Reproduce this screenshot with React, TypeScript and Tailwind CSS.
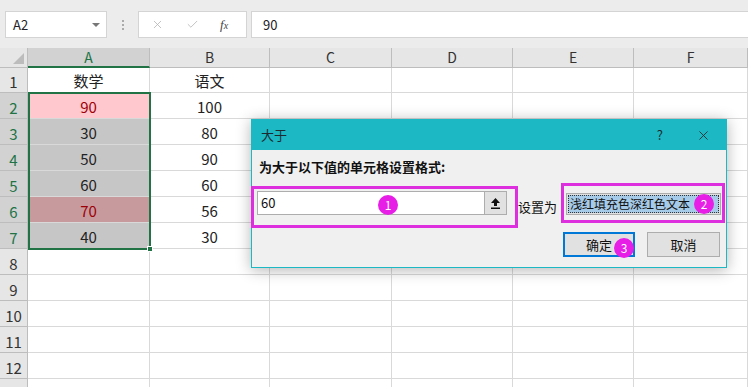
import { X, Check } from "lucide-react";

const cols = ["A", "B", "C", "D", "E", "F"];

const cellA: Record<number, { text: string; cls: string }> = {
  1: { text: "数学", cls: "bg-white text-[#222]" },
  2: { text: "90", cls: "bg-[#ffc7ce] text-[#9c0006]" },
  3: { text: "30", cls: "bg-[#c6c6c6] text-[#222]" },
  4: { text: "50", cls: "bg-[#c6c6c6] text-[#222]" },
  5: { text: "60", cls: "bg-[#c6c6c6] text-[#222]" },
  6: { text: "70", cls: "bg-[#c79a9e] text-[#9c0006]" },
  7: { text: "40", cls: "bg-[#c6c6c6] text-[#222]" },
};

const colB: Record<number, string> = {
  1: "语文",
  2: "100",
  3: "80",
  4: "90",
  5: "60",
  6: "56",
  7: "30",
};

function Badge({ n }: { n: number }) {
  return (
    <span className="flex h-[20px] w-[20px] items-center justify-center rounded-full bg-[#e61ee6] text-[12px] leading-none text-white">
      {n}
    </span>
  );
}

function FormulaBar() {
  return (
    <div className="h-[48px] bg-[#ececec] pt-[11px]">
      <div className="flex h-[27px] items-stretch">
        <div className="ml-[5px] flex w-[102px] items-center justify-between border border-[#d4d4d4] bg-white pl-[7px] pr-[6px] text-[13px] text-[#222]">
          <span>A2</span>
          <span className="h-0 w-0 border-x-[4px] border-t-[4px] border-x-transparent border-t-[#777]" />
        </div>
        <div className="flex w-[31px] flex-col items-center justify-center gap-[2px]">
          <span className="h-[2px] w-[2px] bg-[#aaa]" />
          <span className="h-[2px] w-[2px] bg-[#aaa]" />
          <span className="h-[2px] w-[2px] bg-[#aaa]" />
        </div>
        <div className="flex w-[109px] items-center border border-[#d4d4d4] bg-white">
          <X className="ml-[12px] h-[13px] w-[13px] text-[#b5b5b5]" strokeWidth={1.5} />
          <Check className="ml-[22px] h-[13px] w-[13px] text-[#b5b5b5]" strokeWidth={1.5} />
          <span className="ml-[21px] font-['Liberation_Serif',serif] text-[13px] italic text-[#444]">
            f<span className="text-[10px]">x</span>
          </span>
        </div>
        <div className="ml-[4px] flex flex-1 items-center border border-r-0 border-[#d4d4d4] bg-white pl-[11px] text-[13px] text-[#222]">
          90
        </div>
      </div>
    </div>
  );
}

function Sheet() {
  const rows = Array.from({ length: 13 }, (_, i) => i + 1);
  return (
    <div className="relative">
      <div className="grid grid-cols-[28px_122px_120px_122px_121px_121px_114px]">
        {/* header row */}
        <div className="relative h-[20px] border-b border-r border-[#bdbdbd] bg-[#e6e6e6]">
          <span className="absolute bottom-[3px] right-[3px] h-0 w-0 border-b-[11px] border-l-[11px] border-b-[#bcbcbc] border-l-transparent" />
        </div>
        {cols.map((c) => (
          <div
            key={c}
            className={
              c === "A"
                ? "flex h-[20px] items-end justify-center border-b-2 border-r border-b-[#217346] border-r-[#bdbdbd] bg-[#d2d2d2] text-[14px] leading-[18px] text-[#217346]"
                : "flex h-[20px] items-end justify-center border-b border-r border-[#bdbdbd] bg-[#e6e6e6] text-[14px] leading-[19px] text-[#333]"
            }
          >
            {c}
          </div>
        ))}
        {rows.map((r) => {
          const h = r === 1 ? "h-[25px]" : "h-[26px]";
          const sel = r >= 2 && r <= 7;
          return [
            <div
              key={`h${r}`}
              className={`${h} flex items-end justify-center border-b border-r border-[#bdbdbd] text-[15px] leading-[20px] ${
                sel ? "bg-[#d2d2d2] text-[#217346]" : "bg-[#e6e6e6] text-[#333]"
              }`}
            >
              {r < 13 ? r : ""}
            </div>,
            ...cols.map((c) => {
              let text = "";
              let cls = "bg-white text-[#222]";
              if (c === "A" && cellA[r]) {
                text = cellA[r].text;
                cls = cellA[r].cls;
              }
              if (c === "B" && colB[r]) text = colB[r];
              return (
                <div
                  key={`${c}${r}`}
                  className={`${h} flex items-end justify-center border-b border-r border-[#d9d9d9] pb-[1px] text-[15px] leading-[20px] ${cls}`}
                >
                  {text}
                </div>
              );
            }),
          ];
        })}
      </div>
      {/* selection A2:A7 */}
      <div className="pointer-events-none absolute left-[28px] top-[44px] h-[158px] w-[123px] border-2 border-[#217346]">
        <span className="absolute -bottom-[4px] -right-[4px] h-[6px] w-[6px] border border-white bg-[#217346]" />
      </div>
    </div>
  );
}

function Dialog() {
  return (
    <div className="absolute left-[251px] top-[119px] h-[149px] w-[476px] border border-[#1cb8c4] bg-[#f0f0f0] text-[#111] shadow-[0_2px_14px_rgba(0,0,0,0.3)]">
      <div className="flex h-[30px] items-center bg-[#1cb8c4] pl-[9px] text-[13px] text-[#1a2a30]">
        <span>大于</span>
        <span className="ml-auto mr-[33px] text-[13px]">?</span>
        <X className="mr-[15px] h-[15px] w-[15px]" strokeWidth={1.4} />
      </div>
      <div className="pl-[7px] pt-[8px] text-[13px] font-bold leading-[18px]">
        为大于以下值的单元格设置格式:
      </div>
      <div className="mt-[7px] flex items-start">
        <div className="relative -ml-px mt-[3px] h-[42px] w-[267px] border-[3px] border-[#de2fde] pl-[3px] pt-[2px]">
          <div className="flex h-[24px] w-[250px]">
            <div className="flex flex-1 items-center border border-[#adadad] bg-white pl-[3px] text-[13px]">
              60
            </div>
            <div className="flex w-[22px] items-center justify-center border border-l-0 border-[#adadad] bg-[#e1e1e1]">
              <svg width="11" height="12" viewBox="0 0 11 12">
                <path d="M5.5 1 L10 6 H7 V9 H4 V6 H1 Z" fill="#111" />
                <rect x="1" y="10.5" width="9" height="1.5" fill="#111" />
              </svg>
            </div>
          </div>
          <div className="absolute left-[124px] top-[6px]">
            <Badge n={1} />
          </div>
        </div>
        <div className="mt-[15px] text-[13px] leading-[18px]">设置为</div>
        <div className="relative ml-[4px] h-[40px] w-[164px] border-[3px] border-[#de2fde] pl-[2px] pt-[7px]">
          <div className="flex h-[22px] w-[155px] items-center border border-[#adadad] bg-[#e1e1e1] p-[1px]">
            <div className="flex h-full flex-1 items-center overflow-hidden whitespace-nowrap border border-dotted border-[#333] bg-[#a6cbe9] pl-[1px] text-[12px] leading-none">
              浅红填充色深红色文本
            </div>
          </div>
          <div className="absolute left-[130px] top-[8px]">
            <Badge n={2} />
          </div>
        </div>
      </div>
      <div className="mt-[4px] flex">
        <div className="relative ml-[311px] flex h-[25px] w-[72px] items-center justify-center border-2 border-[#0078d7] bg-[#e1e1e1] text-[13px]">
          确定
          <div className="absolute left-[49px] top-[4px]">
            <Badge n={3} />
          </div>
        </div>
        <div className="ml-[12px] flex h-[25px] w-[73px] items-center justify-center border border-[#adadad] bg-[#e1e1e1] text-[13px]">
          取消
        </div>
      </div>
    </div>
  );
}

export default function App() {
  return (
    <div className="relative h-[387px] w-[748px] overflow-hidden bg-white font-['Noto_Sans_CJK_SC',sans-serif]">
      <FormulaBar />
      <Sheet />
      <Dialog />
    </div>
  );
}
